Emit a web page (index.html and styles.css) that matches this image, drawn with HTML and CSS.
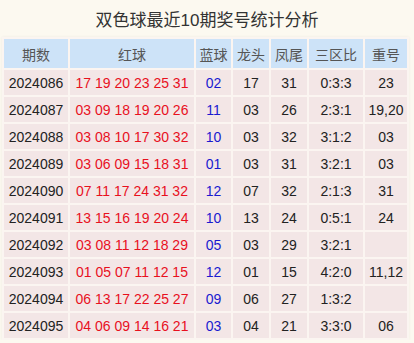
FILE: index.html
```html
<!DOCTYPE html>
<html lang="zh">
<head>
<meta charset="utf-8">
<link rel="stylesheet" href="styles.css">
</head>
<body>
<div class="title">双色球最近10期奖号统计分析</div>
<table class="stats">
  <colgroup>
    <col class="c-qi"><col class="c-red"><col class="c-blue"><col class="c-n"><col class="c-n"><col class="c-zone"><col class="c-rep">
  </colgroup>
  <thead>
    <tr><th>期数</th><th>红球</th><th>蓝球</th><th>龙头</th><th>凤尾</th><th>三区比</th><th>重号</th></tr>
  </thead>
  <tbody>
    <tr><td>2024086</td><td class="red">17 19 20 23 25 31</td><td class="blue">02</td><td>17</td><td>31</td><td>0:3:3</td><td>23</td></tr>
    <tr><td>2024087</td><td class="red">03 09 18 19 20 26</td><td class="blue">11</td><td>03</td><td>26</td><td>2:3:1</td><td>19,20</td></tr>
    <tr><td>2024088</td><td class="red">03 08 10 17 30 32</td><td class="blue">10</td><td>03</td><td>32</td><td>3:1:2</td><td>03</td></tr>
    <tr><td>2024089</td><td class="red">03 06 09 15 18 31</td><td class="blue">01</td><td>03</td><td>31</td><td>3:2:1</td><td>03</td></tr>
    <tr><td>2024090</td><td class="red">07 11 17 24 31 32</td><td class="blue">12</td><td>07</td><td>32</td><td>2:1:3</td><td>31</td></tr>
    <tr><td>2024091</td><td class="red">13 15 16 19 20 24</td><td class="blue">10</td><td>13</td><td>24</td><td>0:5:1</td><td>24</td></tr>
    <tr><td>2024092</td><td class="red">03 08 11 12 18 29</td><td class="blue">05</td><td>03</td><td>29</td><td>3:2:1</td><td></td></tr>
    <tr><td>2024093</td><td class="red">01 05 07 11 12 15</td><td class="blue">12</td><td>01</td><td>15</td><td>4:2:0</td><td>11,12</td></tr>
    <tr><td>2024094</td><td class="red">06 13 17 22 25 27</td><td class="blue">09</td><td>06</td><td>27</td><td>1:3:2</td><td></td></tr>
    <tr><td>2024095</td><td class="red">04 06 09 14 16 21</td><td class="blue">03</td><td>04</td><td>21</td><td>3:3:0</td><td>06</td></tr>
  </tbody>
</table>
</body>
</html>
```

FILE: styles.css
```css
html, body {
  margin: 0;
  padding: 0;
  background: #fcf9f0;
}
body {
  font-family: "Liberation Sans", Arial, "Noto Sans CJK SC", sans-serif;
  color: #222;
}
.title {
  height: 37px;
  line-height: 42px;
  text-align: center;
  font-size: 17px;
  color: #333;
  font-family: "Liberation Sans", "Noto Sans CJK SC", sans-serif;
}
.stats {
  margin-left: 2px;
  border-collapse: separate;
  border-spacing: 2px;
  table-layout: fixed;
  width: 407px;
  background: #fbf5f1;
  box-shadow: 0 0 3px rgba(0,0,0,0.06);
}
.c-qi { width: 64px; }
.c-red { width: 124px; }
.c-blue { width: 35px; }
.c-n { width: 36px; }
.c-zone { width: 54px; }
.c-rep { width: 42px; }
.stats th {
  background: #cde3f8;
  color: #555;
  font-weight: normal;
  font-size: 14px;
  height: 29px;
  padding: 0;
  text-align: center;
}
.stats td {
  background: #f3e6e6;
  height: 25px;
  padding: 0;
  text-align: center;
  font-size: 14px;
  color: #222;
  white-space: nowrap;
}
.stats td.red { color: #e8101e; }
.stats td.blue { color: #1a1ad0; }
```
